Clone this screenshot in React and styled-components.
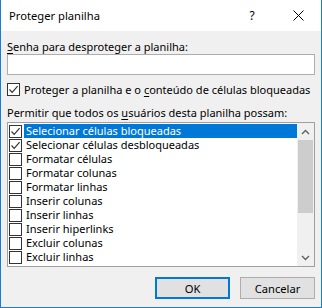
import React from "react";
import styled, { createGlobalStyle } from "styled-components";

const Global = createGlobalStyle`
  html, body { margin: 0; padding: 0; background: #fff; }
  * { box-sizing: border-box; }
  body { font-family: "Noto Sans", "Open Sans", sans-serif; font-size: 11px; color: #000; }
`;

const Window = styled.div`
  width: 322px;
  height: 308px;
  border: 1px solid #1c7cd5;
  border-top: none;
  display: flex;
  flex-direction: column;
  background: #f0f0f0;
  overflow: hidden;
`;

const TitleBar = styled.div`
  height: 31px;
  flex: none;
  background: #fff;
  display: flex;
  align-items: center;
  padding-left: 8px;
`;

const Title = styled.div`
  flex: 1;
  font-size: 11.2px;
  line-height: 16px;
`;

const TitleButton = styled.div`
  width: ${p => p.$w}px;
  height: 31px;
  display: flex;
  align-items: center;
  justify-content: center;
  font-size: 12px;
`;

const Body = styled.div`
  flex: 1;
  display: flex;
  flex-direction: column;
  padding: 8px 6px 0 6px;
`;

const Label = styled.div`
  line-height: 15px;
  height: 15px;
  margin-top: ${p => p.$mt || 0}px;
  white-space: nowrap;
`;

const U = styled.span`
  text-decoration: underline;
  text-underline-offset: 2px;
`;

const Input = styled.div`
  height: 21px;
  background: #fff;
  border: 1px solid #adadad;
`;

const CheckRow = styled.div`
  display: flex;
  align-items: center;
  gap: 4px;
  height: 13px;
  margin-top: 8px;
  white-space: nowrap;
`;

const Box = styled.div`
  width: 13px;
  height: 13px;
  flex: none;
  border: 1px solid #333;
  background: #fff;
  display: flex;
  align-items: center;
  justify-content: center;
`;

const List = styled.div`
  margin-top: 2px;
  height: 145px;
  flex: none;
  border: 1px solid #a0a0a0;
  background: #fff;
  display: flex;
`;

const Items = styled.div`
  flex: 1;
  padding-top: 1px;
  display: flex;
  flex-direction: column;
  overflow: hidden;
`;

const Item = styled.div`
  height: 14px;
  flex: none;
  display: flex;
  align-items: center;
  padding-left: 1px;
  white-space: nowrap;
`;

const ItemText = styled.div`
  margin-left: 2px;
  height: 14px;
  line-height: 14px;
  flex: 1;
  padding-left: 2px;
  background: ${p => (p.$sel ? "#0078d7" : "transparent")};
  color: ${p => (p.$sel ? "#fff" : "#000")};
`;

const Scrollbar = styled.div`
  width: 17px;
  background: #f0f0f0;
  display: flex;
  flex-direction: column;
`;

const Arrow = styled.div`
  height: 17px;
  display: flex;
  align-items: center;
  justify-content: center;
`;

const Thumb = styled.div`
  height: 73px;
  margin: 0 1px;
  background: #cdcdcd;
`;

const Track = styled.div`
  flex: 1;
`;

const Buttons = styled.div`
  display: flex;
  justify-content: flex-end;
  gap: 10px;
  margin-top: 10px;
`;

const Button = styled.div`
  width: 75px;
  height: 22px;
  background: #e1e1e1;
  border: ${p => (p.$def ? "2px solid #0078d7" : "1px solid #adadad")};
  display: flex;
  align-items: center;
  justify-content: center;
  font-size: 11.2px;
`;

const Check = () => (
  <svg width="11" height="11" viewBox="0 0 11 11">
    <polyline points="1.5,5.5 4.2,8.3 9.6,2.2" fill="none" stroke="#333" strokeWidth="1.2" />
  </svg>
);

const Chevron = ({ up }) => (
  <svg width="9" height="6" viewBox="0 0 9 6">
    <polyline
      points={up ? "1,5 4.5,1.5 8,5" : "1,1 4.5,4.5 8,1"}
      fill="none"
      stroke="#606060"
      strokeWidth="1.4"
    />
  </svg>
);

const items = [
  ["Selecionar células bloqueadas", true, true],
  ["Selecionar células desbloqueadas", true, false],
  ["Formatar células", false, false],
  ["Formatar colunas", false, false],
  ["Formatar linhas", false, false],
  ["Inserir colunas", false, false],
  ["Inserir linhas", false, false],
  ["Inserir hiperlinks", false, false],
  ["Excluir colunas", false, false],
  ["Excluir linhas", false, false],
];

export default function App() {
  return (
    <>
      <Global />
      <Window>
        <TitleBar>
          <Title>Proteger planilha</Title>
          <TitleButton $w={46}>?</TitleButton>
          <TitleButton $w={46}>
            <svg width="11" height="11" viewBox="0 0 11 11">
              <path d="M0.5 0.5 L10.5 10.5 M10.5 0.5 L0.5 10.5" stroke="#000" strokeWidth="1" />
            </svg>
          </TitleButton>
        </TitleBar>
        <Body>
          <Label>
            <U>S</U>enha para desproteger a planilha:
          </Label>
          <Input />
          <CheckRow>
            <Box><Check /></Box>
            <span>
              Proteger a planilha e o <U>c</U>onteúdo de células bloqueadas
            </span>
          </CheckRow>
          <Label $mt={9}>
            Permitir que todos os <U>u</U>suários desta planilha possam:
          </Label>
          <List>
            <Items>
              {items.map(([t, c, s]) => (
                <Item key={t}>
                  <Box>{c && <Check />}</Box>
                  <ItemText $sel={s}>{t}</ItemText>
                </Item>
              ))}
            </Items>
            <Scrollbar>
              <Arrow><Chevron up /></Arrow>
              <Thumb />
              <Track />
              <Arrow><Chevron /></Arrow>
            </Scrollbar>
          </List>
          <Buttons>
            <Button $def>OK</Button>
            <Button>Cancelar</Button>
          </Buttons>
        </Body>
      </Window>
    </>
  );
}
